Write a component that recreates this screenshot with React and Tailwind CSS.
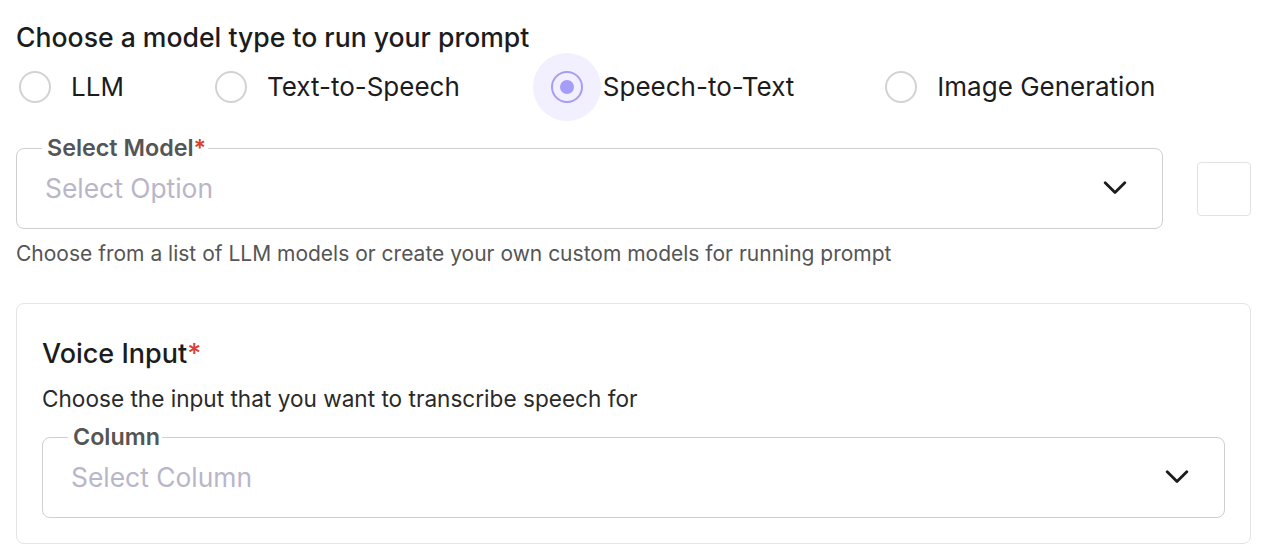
import React, { useState } from "react";

const Chevron = () => (
  <svg width="24" height="14" viewBox="0 0 24 14" fill="none">
    <path d="M2.2 1.8 L12 11.6 L21.8 1.8" stroke="#1c1c1c" strokeWidth="2.8" strokeLinecap="round" strokeLinejoin="round" />
  </svg>
);

const modelTypes = ["LLM", "Text-to-Speech", "Speech-to-Text", "Image Generation"];

const OutlinedSelect = ({ label, required, placeholder, className = "" }) => (
  <fieldset className={`border border-[#cfcfcf] rounded-[8px] pl-[25px] pr-[35px] ${className}`}>
    <legend className="pl-[5px] pr-[2px] text-[23.3px] leading-[24px] font-semibold text-[#555555]">
      {label}
      {required && <span className="text-[#d8412f]">*</span>}
    </legend>
    <div className="h-[80px] -mt-[12px] flex items-center justify-between pl-[3px]">
      <span className="text-[26.4px] leading-[32px] text-[#b9b6c9]">{placeholder}</span>
      <Chevron />
    </div>
  </fieldset>
);

export default function App() {
  const [type, setType] = useState("Speech-to-Text");

  return (
    <div className="w-[1274px] h-[558px] bg-white pt-[21px] pl-[16px] pr-[23px] font-['Inter',sans-serif] text-[#1c1c1c]">
      <h2 className="text-[26.6px] leading-[32px] font-medium">Choose a model type to run your prompt</h2>

      {/* Model type radios */}
      <div className="flex items-center gap-[73px] -ml-[15px] h-[68px]">
        {modelTypes.map((t) => {
          const active = t === type;
          return (
            <label key={t} className="flex items-center gap-[2px] cursor-pointer" onClick={() => setType(t)}>
              <span className={`w-[68px] h-[68px] rounded-full flex items-center justify-center ${active ? "bg-[#f2efff]" : ""}`}>
                <span className={`w-[32px] h-[32px] rounded-full border-[2.5px] flex items-center justify-center ${active ? "border-[#a59df7]" : "border-[#d2d2d2]"}`}>
                  {active && <span className="w-[14px] h-[14px] rounded-full bg-[#a59df7]" />}
                </span>
              </span>
              <span className="text-[26px] leading-[32px]">{t}</span>
            </label>
          );
        })}
      </div>

      {/* Select model */}
      <div className="flex items-end gap-[34px] mt-[15px]">
        <OutlinedSelect label="Select Model" required placeholder="Select Option" className="flex-1" />
        <div className="w-[54px] h-[54px] border border-[#e2e2e2] rounded-[4px] mb-[13px]" />
      </div>
      <p className="mt-[11px] text-[21px] leading-[28px] text-[#555555]">
        Choose from a list of LLM models or create your own custom models for running prompt
      </p>

      {/* Voice input card */}
      <div className="mt-[35px] border border-[#e4e4e4] rounded-[8px] pt-[34px] pb-[25px] px-[25px]">
        <h3 className="text-[27px] leading-[32px] font-medium">
          Voice Input<span className="text-[#d8412f]">*</span>
        </h3>
        <p className="mt-[14px] text-[22.6px] leading-[30px] text-[#2a2a2a]">
          Choose the input that you want to transcribe speech for
        </p>
        <OutlinedSelect label="Column" placeholder="Select Column" className="mt-[11px]" />
      </div>
    </div>
  );
}
